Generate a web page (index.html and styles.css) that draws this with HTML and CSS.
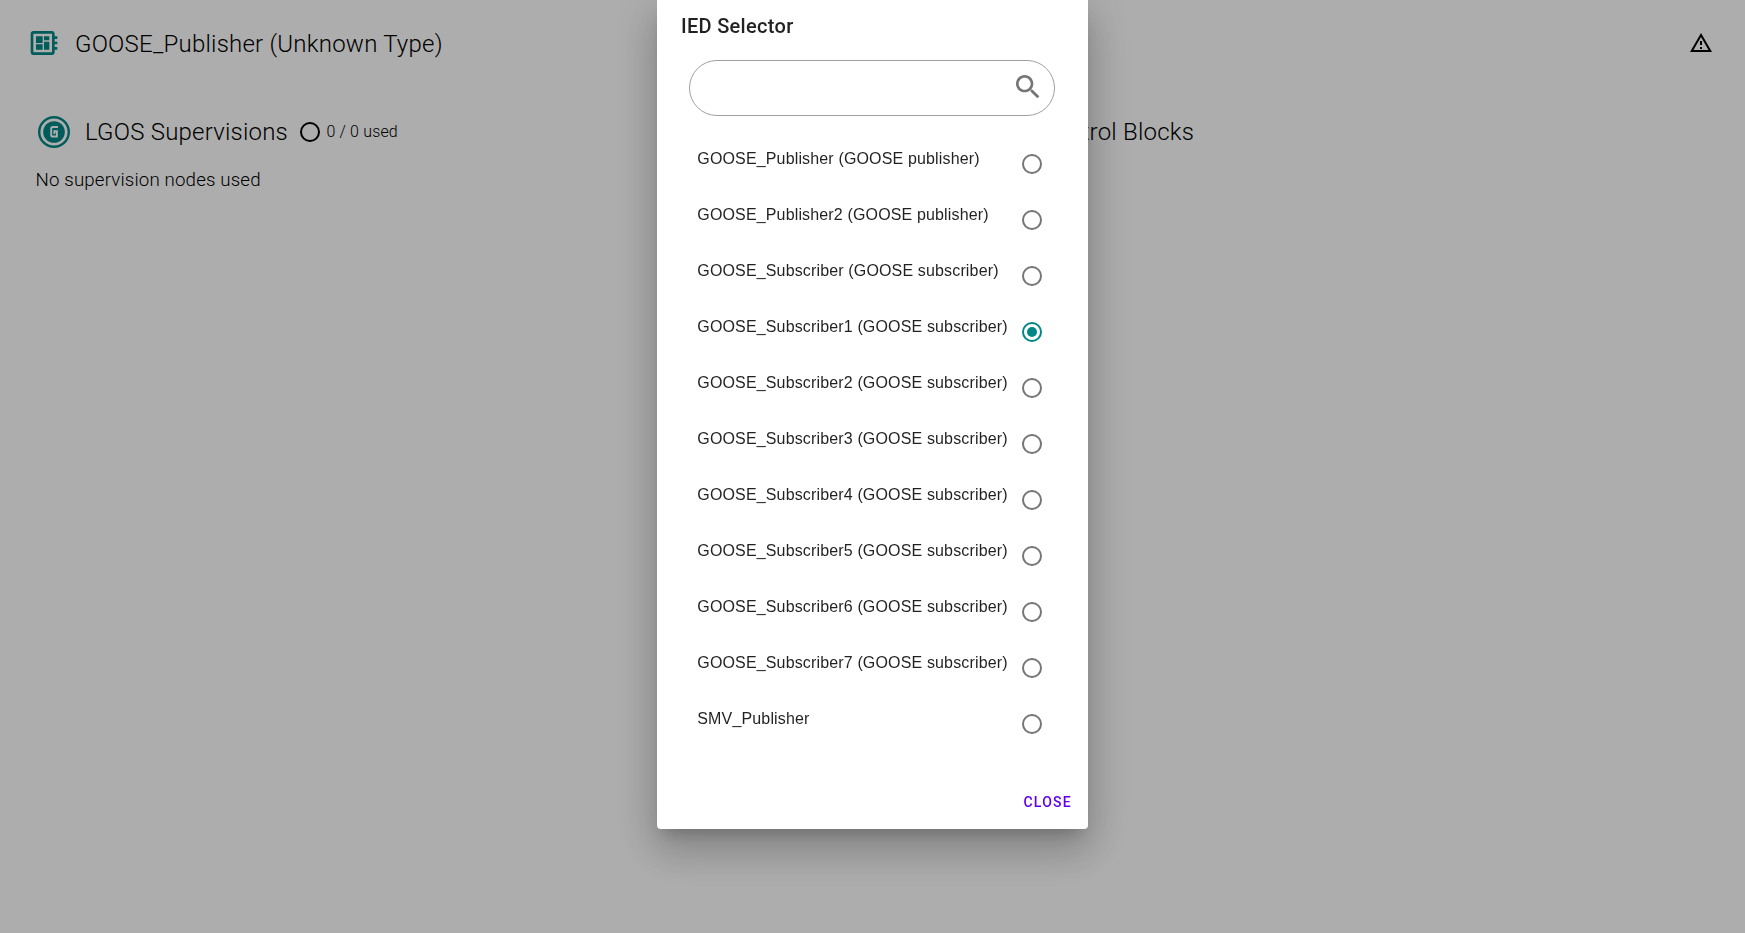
FILE: index.html
```html
<!DOCTYPE html>
<html lang="en">
<head>
<meta charset="utf-8">
<title>IED Selector</title>
<link rel="stylesheet" href="styles.css">
</head>
<body>
<main class="page">
  <header class="page-header">
    <svg class="icon-board" viewBox="0 0 24 24"><path d="M22 9V7h-2V5c0-1.1-.9-2-2-2H4c-1.1 0-2 .9-2 2v14c0 1.1.9 2 2 2h14c1.1 0 2-.9 2-2v-2h2v-2h-2v-2h2v-2h-2V9h2zm-4 10H4V5h14v14zM6 13h5v4H6zm6-6h4v3h-4zM6 7h5v5H6zm6 4h4v6h-4z"/></svg>
    <h1 class="page-title">GOOSE_Publisher (Unknown Type)</h1>
    <svg class="icon-warning" viewBox="0 0 24 24"><path d="M12 5.99L19.53 19H4.47L12 5.99M12 2L1 21h22L12 2zm1 14h-2v2h2v-2zm0-6h-2v4h2v-4z"/></svg>
  </header>
  <div class="columns">
    <section class="column">
      <div class="section-head">
        <svg class="icon-goose" viewBox="0 0 32 32"><circle class="ring" cx="16" cy="16" r="14.8"/><circle cx="16" cy="16" r="10.8"/><path class="letter" d="M20 11H14.8Q13.2 11 13.2 12.6V18.9Q13.2 20.5 14.8 20.5H18.9V15.2H16.4V18"/></svg>
        <h2 class="section-title">LGOS Supervisions</h2>
        <svg class="icon-circle" viewBox="0 0 24 24"><circle cx="12" cy="12" r="9"/></svg>
        <span class="usage">0 / 0 used</span>
      </div>
      <p class="empty">No supervision nodes used</p>
    </section>
    <section class="column">
      <div class="section-head"><h2 class="section-title available">Available GOOSE Control Blocks</h2></div>
    </section>
  </div>
</main>
<div class="scrim">
  <div class="dialog" role="dialog">
    <h2 class="dialog-title">IED Selector</h2>
    <div class="search">
      <svg class="icon-search" viewBox="0 0 24 24"><path d="M15.5 14h-.79l-.28-.27C15.41 12.59 16 11.11 16 9.5 16 5.91 13.09 3 9.5 3S3 5.91 3 9.5 5.91 16 9.5 16c1.61 0 3.09-.59 4.23-1.57l.27.28v.79l5 4.99L20.49 19l-4.99-5zm-6 0C7.01 14 5 11.99 5 9.5S7.01 5 9.5 5 14 7.01 14 9.5 11.99 14 9.5 14z"/></svg>
    </div>
    <ul class="list">
      <li class="item"><span class="label">GOOSE_Publisher (GOOSE publisher)</span><span class="radio"></span></li>
      <li class="item"><span class="label">GOOSE_Publisher2 (GOOSE publisher)</span><span class="radio"></span></li>
      <li class="item"><span class="label">GOOSE_Subscriber (GOOSE subscriber)</span><span class="radio"></span></li>
      <li class="item"><span class="label">GOOSE_Subscriber1 (GOOSE subscriber)</span><span class="radio checked"></span></li>
      <li class="item"><span class="label">GOOSE_Subscriber2 (GOOSE subscriber)</span><span class="radio"></span></li>
      <li class="item"><span class="label">GOOSE_Subscriber3 (GOOSE subscriber)</span><span class="radio"></span></li>
      <li class="item"><span class="label">GOOSE_Subscriber4 (GOOSE subscriber)</span><span class="radio"></span></li>
      <li class="item"><span class="label">GOOSE_Subscriber5 (GOOSE subscriber)</span><span class="radio"></span></li>
      <li class="item"><span class="label">GOOSE_Subscriber6 (GOOSE subscriber)</span><span class="radio"></span></li>
      <li class="item"><span class="label">GOOSE_Subscriber7 (GOOSE subscriber)</span><span class="radio"></span></li>
      <li class="item"><span class="label">SMV_Publisher</span><span class="radio"></span></li>
    </ul>
    <div class="actions"><button class="close">CLOSE</button></div>
  </div>
</div>
</body>
</html>
```
FILE: styles.css
```css
* { box-sizing: border-box; margin: 0; padding: 0; }
html, body { height: 100%; overflow: hidden; }
body { background: #fff; color: #000; font-family: Roboto, "Liberation Sans", sans-serif; font-weight: 300; }
svg { display: block; flex: none; }

.page-header { display: flex; align-items: center; height: 86px; padding: 0 32px 0 28px; }
.icon-board { width: 32px; height: 32px; fill: #018786; }
.page-title { flex: 1; margin-left: 15px; padding-top: 2px; font-size: 24px; line-height: 32px; font-weight: 300; letter-spacing: .22px; }
.icon-warning { width: 24px; height: 24px; }

.columns { display: grid; grid-template-columns: 1fr 1fr; padding-top: 22px; }
.section-head { display: flex; align-items: center; height: 48px; padding-left: 38px; }
.icon-goose { width: 32px; height: 32px; fill: #018786; }
.icon-goose .ring { fill: none; stroke: #018786; stroke-width: 2.4; }
.icon-goose .letter { fill: none; stroke: #fff; stroke-width: 1.9; }
.section-title { margin-left: 15px; font-size: 24px; line-height: 32px; font-weight: 300; letter-spacing: .21px; white-space: nowrap; }
.section-title.available { margin-left: -57px; }
.icon-circle { width: 24px; height: 24px; margin: -1px 0 0 10px; fill: none; stroke: #000; stroke-width: 2; }
.usage { margin: -1px 0 0 4.5px; font-size: 16px; letter-spacing: .16px; }
.empty { padding: 12px 0 0 35.5px; font-size: 18.72px; line-height: 24px; letter-spacing: .15px; }

.scrim { position: fixed; inset: 0; display: flex; justify-content: center; align-items: flex-start; background: rgba(0, 0, 0, .32); }
.dialog {
  width: 431px; height: 829px; padding: 0 8px 9px; display: flex; flex-direction: column;
  background: #fff; color: rgba(0, 0, 0, .87); border-radius: 0 0 4px 4px;
  box-shadow: 0 11px 15px -7px rgba(0, 0, 0, .2), 0 24px 38px 3px rgba(0, 0, 0, .14), 0 9px 46px 8px rgba(0, 0, 0, .12);
}
.dialog-title { padding: 10px 16px 0; font-size: 20px; line-height: 32px; font-weight: 500; letter-spacing: .3px; }
.search { display: flex; align-items: center; justify-content: flex-end; height: 56px; margin: 18px 25px 0 24px; padding: 0 10px 2px 0; border: 1px solid #9e9e9e; border-radius: 28px; }
.icon-search { width: 32px; height: 32px; fill: #757575; }
.list { margin-top: 20px; list-style: none; }
.item { display: flex; align-items: center; justify-content: space-between; height: 56px; padding: 0 38px 0 32.3px; }
.label { margin-top: -10px; font: 400 16px/24px "Liberation Sans", Arial, sans-serif; letter-spacing: .15px; white-space: nowrap; }
.radio { display: grid; place-items: center; width: 20px; height: 20px; border: 2px solid #757575; border-radius: 50%; }
.radio.checked { border-color: #018786; }
.radio.checked::after { content: ""; width: 10px; height: 10px; border-radius: 50%; background: #018786; }
.actions { display: flex; justify-content: flex-end; margin-top: auto; }
.close { height: 36px; padding: 0 8px; border: 0; background: none; color: #6200ee; font: 500 14px Roboto, sans-serif; letter-spacing: 1.25px; }
```
